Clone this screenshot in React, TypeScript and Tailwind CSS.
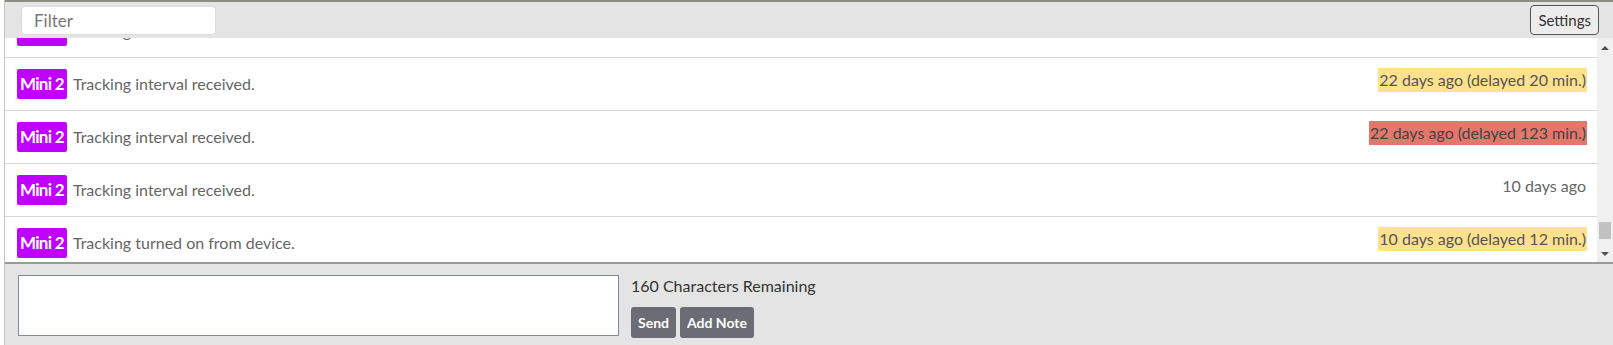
type Entry = {
  text: string;
  time: string;
  level?: "warn" | "late";
};

const entries: Entry[] = [
  { text: "Tracking interval received.", time: "22 days ago" },
  { text: "Tracking interval received.", time: "22 days ago (delayed 20 min.)", level: "warn" },
  { text: "Tracking interval received.", time: "22 days ago (delayed 123 min.)", level: "late" },
  { text: "Tracking interval received.", time: "10 days ago" },
  { text: "Tracking turned on from device.", time: "10 days ago (delayed 12 min.)", level: "warn" },
];

function Row({ entry, first }: { entry: Entry; first?: boolean }) {
  const tone =
    entry.level === "warn"
      ? "bg-[#fde18c] text-[#555]"
      : entry.level === "late"
        ? "bg-[#e2776b] text-[#444]"
        : "text-[#666]";
  return (
    <div
      className={`flex h-[53px] shrink-0 items-start border-b border-[#d6d6d6] pl-[12px] pr-[10px] pt-[11px] ${first ? "mt-[-33px]" : ""}`}
    >
      <span className="flex h-[30px] items-center rounded-[2px] bg-[#bf00ff] px-[3px] text-[17px] font-bold tracking-[-0.7px] text-white">
        Mini 2
      </span>
      <span className="ml-[6px] text-[16px] leading-[30px] text-[#666]">{entry.text}</span>
      <span className={`ml-auto mt-[-1px] px-[1px] text-[16px] leading-[24px] ${tone}`}>{entry.time}</span>
    </div>
  );
}

function Scrollbar() {
  return (
    <div className="flex w-[16px] shrink-0 flex-col bg-[#f0f0f0]">
      <div className="flex h-[19px] items-center justify-center">
        <div className="h-0 w-0 border-x-[4px] border-b-[4px] border-x-transparent border-b-[#505050]" />
      </div>
      <div className="flex flex-1 flex-col justify-end px-[2px] pb-[6px]">
        <div className="h-[17px] bg-[#c1c1c1]" />
      </div>
      <div className="flex h-[17px] items-center justify-center">
        <div className="h-0 w-0 border-x-[4px] border-t-[4px] border-x-transparent border-t-[#505050]" />
      </div>
    </div>
  );
}

export default function App() {
  return (
    <div className="flex h-[345px] w-full bg-white font-['Lato',sans-serif]">
      <div className="w-[4px] bg-white" />
      <div className="flex min-w-0 flex-1 flex-col border-l border-[#c4c4c4]">
        <div className="h-[2px] shrink-0 bg-[#8c8c82]" />
        <div className="flex h-[36px] shrink-0 items-center justify-between bg-[#e4e4e4] pl-[16px] pr-[14px]">
          <input
            placeholder="Filter"
            className="h-[29px] w-[195px] rounded-[4px] border border-[#dcdcdc] bg-white px-[12px] text-[17px] text-[#333] outline-none placeholder:text-[#777]"
          />
          <button className="h-[30px] rounded-[4px] border border-[#555] bg-[#ececec] px-[7px] text-[15px] text-[#333]">
            Settings
          </button>
        </div>
        <div className="flex h-[226px] shrink-0 border-b-2 border-[#9a9a9a] bg-white">
          <div className="flex min-w-0 flex-1 flex-col overflow-hidden">
            {entries.map((e, i) => (
              <Row key={i} entry={e} first={i === 0} />
            ))}
          </div>
          <Scrollbar />
        </div>
        <div className="flex flex-1 items-start bg-[#e4e4e4] pl-[13px] pt-[11px]">
          <textarea className="h-[61px] w-[601px] resize-none border border-[#7d8ba0] bg-white outline-none" />
          <div className="ml-[12px] flex flex-col">
            <span className="mt-[1px] text-[16px] leading-[20px] text-[#333]">160 Characters Remaining</span>
            <div className="mt-[11px] flex gap-[4px]">
              <button className="h-[31px] rounded-[3px] bg-[#6c6c74] px-[7px] text-[14px] font-bold text-white">
                Send
              </button>
              <button className="h-[31px] rounded-[3px] bg-[#6c6c74] px-[7px] text-[14px] font-bold text-white">
                Add Note
              </button>
            </div>
          </div>
        </div>
      </div>
    </div>
  );
}
